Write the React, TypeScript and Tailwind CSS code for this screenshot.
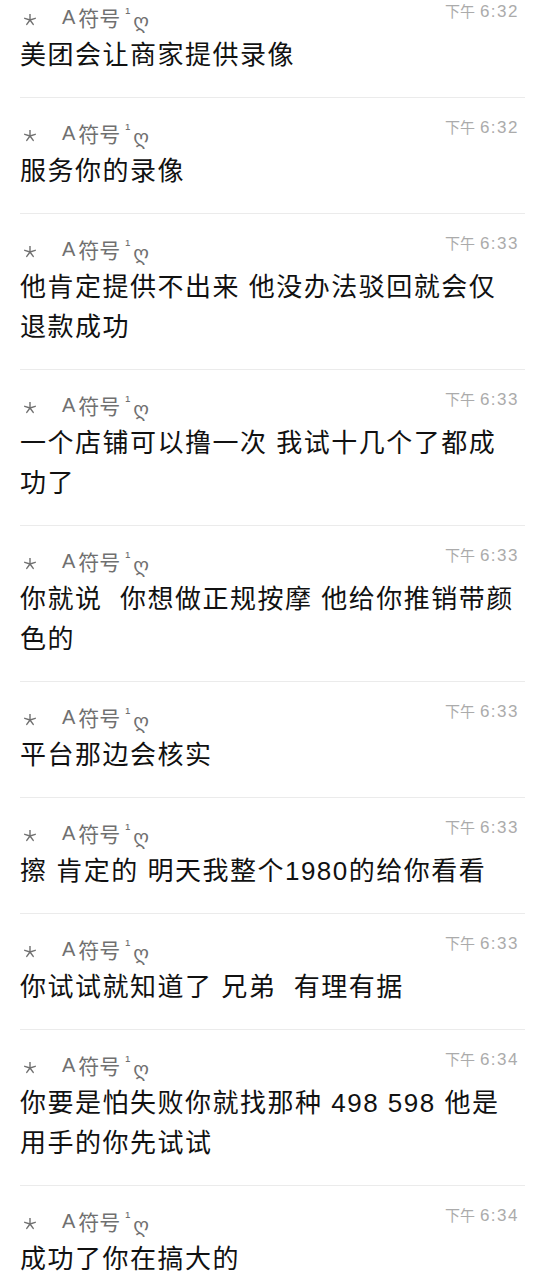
const messages = [
  { time: "6:32", lines: ["美团会让商家提供录像"] },
  { time: "6:32", lines: ["服务你的录像"] },
  { time: "6:33", lines: ["他肯定提供不出来 他没办法驳回就会仅", "退款成功"] },
  { time: "6:33", lines: ["一个店铺可以撸一次 我试十几个了都成", "功了"] },
  { time: "6:33", lines: ["你就说  你想做正规按摩 他给你推销带颜", "色的"] },
  { time: "6:33", lines: ["平台那边会核实"] },
  { time: "6:33", lines: ["擦 肯定的 明天我整个1980的给你看看"] },
  { time: "6:33", lines: ["你试试就知道了 兄弟  有理有据"] },
  { time: "6:34", lines: ["你要是怕失败你就找那种 498 598 他是", "用手的你先试试"] },
  { time: "6:34", lines: ["成功了你在搞大的"] },
];

function Asterisk() {
  // five thin arms, like the system font's "*"
  const arms = [-90, -18, 54, 126, 198].map((deg) => {
    const r = (deg * Math.PI) / 180;
    return { x: 6 + Math.cos(r) * 5.5, y: 6 + Math.sin(r) * 5.5 };
  });
  return (
    <svg width="12" height="12" viewBox="0 0 12 12" className="mt-[6px]">
      {arms.map((p, i) => (
        <line key={i} x1="6" y1="6" x2={p.x} y2={p.y} stroke="#707070" strokeWidth="1.4" strokeLinecap="round" />
      ))}
    </svg>
  );
}

function MessageHeader({ time }: { time: string }) {
  return (
    <div className="flex items-start justify-between h-[28px]">
      <div className="flex items-center h-[28px] text-[#707070] text-[20px] leading-[28px]">
        <span className="ml-[4px] w-[38px] flex">
          <Asterisk />
        </span>
        <span>A</span>
        <span className="ml-[3px] text-[21px] font-['Noto_Sans_CJK_SC',sans-serif]">符号</span>
        <span className="ml-[5px] text-[15px] self-start leading-[20px]">¹</span>
        <span className="ml-[3px] mt-[7px] text-[20px] font-['DejaVu_Sans',sans-serif]">ღ</span>
      </div>
      <div className="flex items-baseline leading-[16px] mr-[30px] text-[#ababab]">
        <span className="text-[15px] font-['Noto_Sans_CJK_SC',sans-serif]">下午</span>
        <span className="ml-[5px] text-[17px] tracking-[1.5px]">{time}</span>
      </div>
    </div>
  );
}

export default function App() {
  return (
    <div className="min-h-screen bg-white font-['Liberation_Sans','Noto_Sans_CJK_SC','DejaVu_Sans',sans-serif]">
      {messages.map((msg, i) => (
        <div key={i}>
          {i > 0 && <div className="h-px bg-[#ebebeb] ml-[20px] mr-[24px]" />}
          <div className={`pl-[20px] pb-[22px] ${i === 0 ? "pt-[3px]" : "pt-[21px]"}`}>
            <MessageHeader time={msg.time} />
            <div className="mt-[4px] text-[26px] leading-[40px] tracking-[1.5px] text-[#111111]">
              {msg.lines.map((line, j) => (
                <div key={j} className="whitespace-pre">
                  {line}
                </div>
              ))}
            </div>
          </div>
        </div>
      ))}
    </div>
  );
}
